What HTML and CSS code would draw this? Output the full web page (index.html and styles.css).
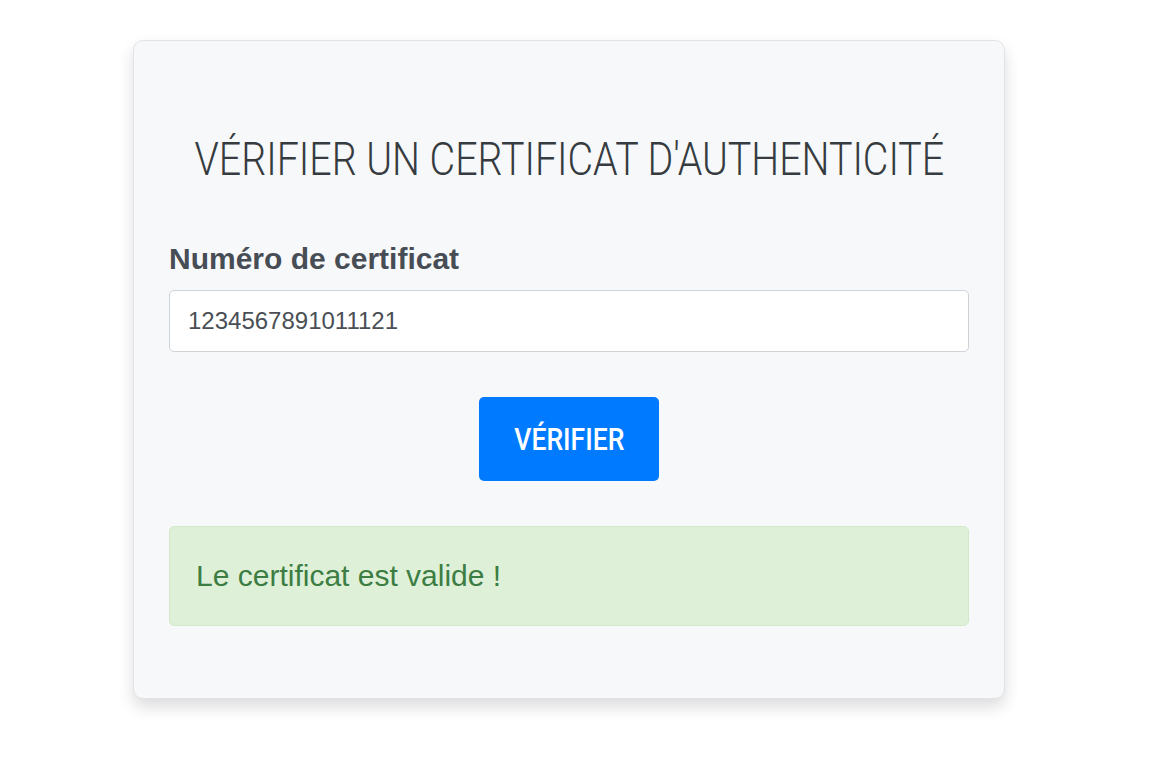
FILE: index.html
```html
<!DOCTYPE html>
<html lang="fr">
<head>
<meta charset="utf-8">
<title>Vérifier un certificat</title>
<link rel="stylesheet" href="styles.css">
</head>
<body>
<main class="card">
  <h1 class="title"><span class="title-text">VÉRIFIER UN CERTIFICAT D'AUTHENTICITÉ</span></h1>
  <form class="form">
    <label class="label" for="num">Numéro de certificat</label>
    <input class="input" id="num" type="text" value="1234567891011121">
    <div class="actions"><button class="btn" type="button"><span class="btn-text">VÉRIFIER</span></button></div>
  </form>
  <div class="alert">Le certificat est valide !</div>
</main>
</body>
</html>
```
FILE: styles.css
```css
html, body { margin: 0; padding: 0; background: #fff; }
html { overflow: hidden; }
body {
  font-family: "Liberation Sans", Arial, sans-serif;
  min-height: 770px;
  padding: 40px 0 0 133px;
  box-sizing: border-box;
}
.card {
  box-sizing: border-box;
  width: 872px;
  padding: 78px 35px 72px;
  background: #f7f8fa;
  border: 1px solid #e1e3e6;
  border-radius: 10px;
  box-shadow: 0 8px 16px rgba(0,0,0,0.14);
}
.title {
  display: flex;
  justify-content: center;
  margin: 0 0 43px;
  white-space: nowrap;
  font-family: Roboto, sans-serif;
  font-weight: 300;
  font-size: 46px;
  line-height: 80px;
  color: #363b40;
}
.title-text { display: inline-block; flex: none; transform: scaleX(0.855); }
.form { display: flex; flex-direction: column; }
.label {
  font-size: 30px;
  font-weight: bold;
  color: #474d54;
  line-height: 34px;
  margin-bottom: 14px;
}
.input {
  box-sizing: border-box;
  height: 62px;
  width: 100%;
  padding: 0 18px;
  border: 1px solid #ced3d8;
  border-radius: 5px;
  background: #fff;
  font-family: "Liberation Sans", Arial, sans-serif;
  font-size: 24px;
  color: #494f55;
}
.actions { display: flex; justify-content: center; margin-top: 45px; }
.btn {
  width: 180px;
  height: 84px;
  border: 0;
  border-radius: 5px;
  background: #007bff;
  color: #fff;
  font-family: Roboto, sans-serif;
  font-weight: 500;
  font-size: 31px;
  white-space: nowrap;
  padding: 0;
}
.btn-text { display: inline-block; transform: scaleX(0.855); }
.alert {
  box-sizing: border-box;
  margin-top: 45px;
  height: 100px;
  display: flex;
  align-items: center;
  padding: 0 26px;
  background: #dff0d8;
  border: 1px solid #d3e9c9;
  border-radius: 5px;
  color: #3c7d43;
  font-size: 30px;
}
```
